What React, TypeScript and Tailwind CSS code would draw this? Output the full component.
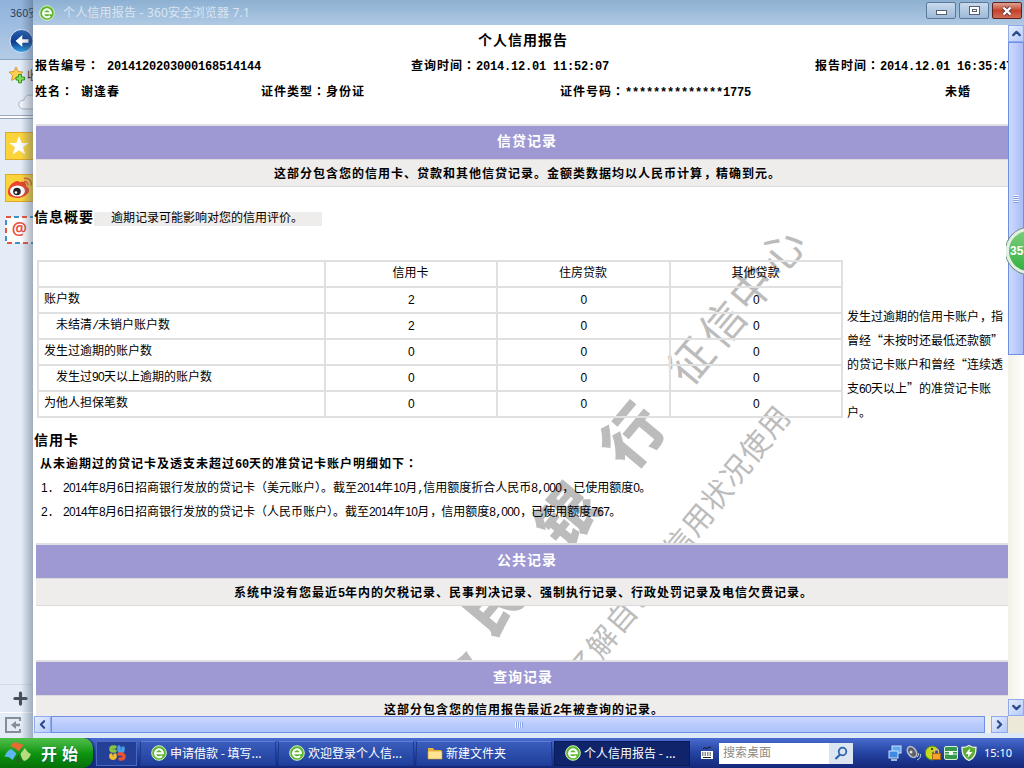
import React from 'react';
import { ChevronUp, ChevronDown, ChevronLeft, ChevronRight, Plus } from 'lucide-react';

const summaryRows = [
  { label: '账户数', values: ['2', '0', '0'] },
  { label: '未结清/未销户账户数', values: ['2', '0', '0'], indent: true },
  { label: '发生过逾期的账户数', values: ['0', '0', '0'] },
  { label: '发生过90天以上逾期的账户数', values: ['0', '0', '0'], indent: true },
  { label: '为他人担保笔数', values: ['0', '0', '0'] },
];

const noteLines = [
  '发生过逾期的信用卡账户，指',
  '曾经“未按时还最低还款额”',
  '的贷记卡账户和曾经“连续透',
  '支60天以上”的准贷记卡账',
  '户。',
];

const thinMarks = [
  { c: '征', x: 691, y: 361 },
  { c: '信', x: 723, y: 324 },
  { c: '中', x: 752, y: 288 },
  { c: '心', x: 782, y: 251 },
];

const boldMarks = [
  { c: '人', x: 440, y: 674, r: -75 },
  { c: '民', x: 493, y: 602, r: -50 },
  { c: '银', x: 567, y: 516, r: -50 },
  { c: '行', x: 633, y: 436, r: -50 },
];

const usageMarks = '了解自己的信用状况使用'.split('').map((c, i) => ({
  c,
  x: 583 + i * 19.1,
  y: 666 - i * 24.4,
}));

// Half-width runs get exactly half of a full-width cell, as in a bitmap song face.
function T({ children, bold }: { children: string; bold?: boolean }) {
  const pattern = bold ? /([\x20-\x7e]+|[：，“”])/ : /([0-9]+|[\x20-\x2f\x3a-\x7e]+|[：，“”])/;
  const parts = children.split(pattern).filter(Boolean);
  return (
    <span className={bold ? 'font-bold tracking-[1px]' : ''}>
      {parts.map((p, i) => {
        if (p === '：') return <span key={i} className="font-['Noto_Sans_CJK_TC',sans-serif]">{p}</span>;
        if (p === '，') return <span key={i} className="relative left-px">{p}</span>;
        if (p === '“' || p === '”') return <span key={i} className="inline-block w-3 text-center">{p}</span>;
        if (!bold && /^[0-9]+$/.test(p)) {
          return <span key={i} className="font-['Liberation_Sans',sans-serif] tracking-[-0.67px]">{p}</span>;
        }
        if (/^[\x20-\x7e]+$/.test(p)) {
          return (
            <span
              key={i}
              className={
                "whitespace-pre font-['Liberation_Mono',monospace] " +
                (bold ? 'tracking-[-0.2px]' : 'tracking-[-1.2px]')
              }
            >
              {p}
            </span>
          );
        }
        return <span key={i}>{p}</span>;
      })}
    </span>
  );
}

function Section({ title, titlePad, text, textPad }: { title: string; titlePad: string; text: string; textPad: string }) {
  return (
    <div className="relative ml-0.5 shrink-0">
      <div className={'h-[35px] border-t-2 border-[#e0dfe3] bg-[#9e99d3] text-[14px] leading-[29px] font-bold tracking-[1px] text-white ' + titlePad}>
        {title}
      </div>
      <div className={'h-7 border-y border-[#dddad9] bg-[#efedec] leading-[25px] ' + textPad}>
        <T bold>{text}</T>
      </div>
    </div>
  );
}

function BrowserIcon() {
  return (
    <svg width="16" height="16" viewBox="0 0 16 16" className="shrink-0">
      <circle cx="8" cy="8" r="7.3" fill="#5cb733" stroke="#d9f2c4" strokeWidth="1" />
      <path d="M3.8 8.2h8.2a4 4 0 1 0-1 2.8" fill="none" stroke="#fff" strokeWidth="2" />
    </svg>
  );
}

function Watermark() {
  return (
    <svg
      width="975"
      height="691"
      viewBox="34 25 975 691"
      className="pointer-events-none absolute top-0 left-0 font-['Noto_Sans_CJK_SC',sans-serif]"
      fill="#bcbcbc"
      textAnchor="middle"
    >
      {thinMarks.map((m) => (
        <text key={m.c} fontSize="44" fontWeight="400" transform={`translate(${m.x} ${m.y}) rotate(-50)`} y="16">{m.c}</text>
      ))}
      {usageMarks.map((m, i) => (
        <text key={i} fontSize="30" fontWeight="400" transform={`translate(${m.x} ${m.y}) rotate(-50)`} y="11">{m.c}</text>
      ))}
      {boldMarks.map((m) => (
        <text key={m.c} fontSize="60" fontWeight="900" transform={`translate(${m.x} ${m.y}) rotate(${m.r})`} y="22">{m.c}</text>
      ))}
    </svg>
  );
}

function Sidebar() {
  return (
    <aside className="relative flex w-[33px] shrink-0 flex-col overflow-hidden bg-[#e3ecf7]">
      <div className="h-[60px] shrink-0 border-b border-[#8ba3c4] bg-linear-to-b from-[#8fb2dc] to-[#b4cbe6]">
        <div className="h-[27px] pl-2.5 text-[11px] leading-[24px] whitespace-nowrap text-[#26405e]">360安</div>
        <svg width="25" height="26" viewBox="0 0 25 26" className="ml-[9px]">
          <defs>
            <linearGradient id="back" x1="0" y1="0" x2="0" y2="1">
              <stop offset="0" stopColor="#2b62b4" />
              <stop offset="0.55" stopColor="#0c3b8c" />
              <stop offset="1" stopColor="#36a9ec" />
            </linearGradient>
          </defs>
          <circle cx="12.5" cy="14" r="11.5" fill="url(#back)" stroke="#dbe8f6" />
          <path d="M19.500 12.200h-6.200V8L6.500 14l6.800 6v-4.200h6.200z" fill="#fff" />
        </svg>
      </div>
      <div className="flex h-[34px] shrink-0 items-end pl-2 text-[12px] text-[#222]">
        <svg width="18" height="18" viewBox="0 0 18 18" className="mb-2.5 shrink-0">
          <path d="M8 1l2 4.500 5 .5-3.700 3.400 1 5L8 12l-4.400 2.400 1-5L1 6l5-.5z" fill="#fbd14f" stroke="#e0982e" />
          <path d="M10.500 8.500h3v2.500h3v3h-3v2.800h-3V14H8v-3h2.500z" fill="#86e05c" stroke="#37911f" />
        </svg>
        <span className="pb-2.5 pl-px leading-[18px]">收</span>
      </div>
      <svg width="33" height="21" viewBox="0 0 33 21" className="shrink-0">
        <path d="M34 15H24c-7 0-7-9 0-9 1-5 6-6 10-4" fill="#f0f4fa" stroke="#aab4c0" />
      </svg>
      <div className="mb-[13px] h-1 shrink-0 border-y border-[#9aa9bb] bg-white" />
      <svg width="28" height="28" viewBox="0 0 28 28" className="mb-3.5 ml-[5px] shrink-0">
        <rect x=".5" y=".5" width="28" height="27" fill="#fbd43c" stroke="#dfa926" />
        <path d="M14 4l2.700 7h7l-5.600 4.300 2.200 7.200L14 18.200 7.700 22.500l2.200-7.200L4.300 11h7z" fill="#fff" />
      </svg>
      <svg width="28" height="28" viewBox="0 0 28 28" className="mb-3.5 ml-[5px] shrink-0">
        <rect x=".5" y=".5" width="28" height="27" fill="#fbd43c" stroke="#dfa926" />
        <path d="M3 17C4 10 12 5 14.500 8c5-1 7 0 6.500 4 6 3 3 10-7 12C7 24 2 22 3 17z" fill="#e8442f" />
        <ellipse cx="12.500" cy="17" rx="7.500" ry="5.500" fill="#fff" />
        <circle cx="12" cy="17.500" r="3.800" fill="#222" />
        <circle cx="11" cy="18.500" r="1.300" fill="#fff" />
        <path d="M19 7.500c3-.5 4 1.500 3.500 4M19 4.500c5-.8 8 2.500 7 7" fill="none" stroke="#ea5b36" strokeWidth="1.500" />
      </svg>
      <svg width="28" height="28" viewBox="0 0 28 28" className="ml-[5px] shrink-0">
        <rect x="1" y="1" width="30" height="26" fill="#fff" stroke="#e6553d" strokeWidth="2" strokeDasharray="5 11" />
        <rect x="1" y="1" width="30" height="26" fill="none" stroke="#3f93c4" strokeWidth="2" strokeDasharray="5 11" strokeDashoffset="8" />
        <text x="14.500" y="19" textAnchor="middle" fontSize="17" fontWeight="600" fill="#e8503f" fontFamily="Noto Sans, sans-serif">@</text>
      </svg>
      <div className="mt-[440px] h-[28px] shrink-0 border-t border-[#d3dce8] pt-1 pl-[11px]">
        <Plus size={19} strokeWidth={4} color="#474f58" />
      </div>
      <div className="flex-1 border-t border-white pt-1 pl-[5px]">
        <svg width="16" height="16" viewBox="0 0 16 16">
          <path d="M15 4V1H1v14h14v-3" fill="none" stroke="#858d98" strokeWidth="2" />
          <path d="M15 6.800h-4V4L6 8l5 4V9.200h4z" fill="#858d98" />
        </svg>
      </div>
      <div className="absolute inset-y-0 right-0 w-3 bg-linear-to-r from-transparent to-[#4a597070]" />
    </aside>
  );
}

function TitleBar() {
  return (
    <header className="flex h-[25px] shrink-0 items-center bg-linear-to-b from-[#8db0d2] to-[#b0c9e4] pl-1.5">
      <BrowserIcon />
      <span className="ml-2 font-['Noto_Sans','Noto_Sans_CJK_SC',sans-serif] text-[12px] tracking-[0.2px] whitespace-pre text-[#d9e5f1]">个人信用报告 - 360安全浏览器 7.1</span>
      <div className="ml-auto flex h-full gap-[3px] pt-0.5 pr-0.5">
        <div className="flex h-[17px] w-[30px] items-center justify-center rounded-[2px] border border-[#5d7898] bg-linear-to-b from-[#c8daed] to-[#9db9d8]">
          <div className="mt-1 h-[5px] w-[11px] border border-[#55616f] bg-white" />
        </div>
        <div className="flex h-[17px] w-[30px] items-center justify-center rounded-[2px] border border-[#5d7898] bg-linear-to-b from-[#c8daed] to-[#9db9d8]">
          <div className="h-[9px] w-[11px] border border-[#55616f] bg-white p-0.5">
            <div className="h-[3px] border border-[#55616f]" />
          </div>
        </div>
        <div className="flex h-[17px] w-[30px] items-center justify-center rounded-[2px] border border-[#5b2320] bg-linear-to-b from-[#dda294] via-[#c4402b] to-[#ce6d54]">
          <svg width="12" height="10" viewBox="0 0 12 10">
            <path d="M2.500 1.500l7 7M9.500 1.500l-7 7" stroke="#5a3a3a" strokeWidth="4" />
            <path d="M2.500 1.500l7 7M9.500 1.500l-7 7" stroke="#fff" strokeWidth="2.400" />
          </svg>
        </div>
      </div>
    </header>
  );
}

function SummaryTable() {
  return (
    <div className="grid w-[806px] shrink-0 grid-cols-[287px_172px_173px_172px] border-t-2 border-l-2 border-[#e0e0e0]">
      {['', '信用卡', '住房贷款', '其他贷款'].map((h, i) => (
        <div key={i} className="h-[26px] border-r-2 border-b-2 border-[#e0e0e0] pr-px text-center leading-[20px]">{h}</div>
      ))}
      {summaryRows.map((row) => (
        <React.Fragment key={row.label}>
          <div className={'h-[26px] border-r-2 border-b-2 border-[#e0e0e0] leading-[20px] ' + (row.indent ? 'pl-[17px]' : 'pl-[5px]')}>
            <T>{row.label}</T>
          </div>
          {row.values.map((v, i) => (
            <div key={i} className="h-[26px] border-r-2 border-b-2 border-[#e0e0e0] text-center leading-[21px]">
              <T>{v}</T>
            </div>
          ))}
        </React.Fragment>
      ))}
    </div>
  );
}

function Report() {
  return (
    <main className="relative h-[691px] w-[974px] overflow-hidden bg-white text-[12px] whitespace-nowrap text-black">
      <Watermark />
      <div className="relative flex flex-col">
        <h1 className="h-7 pl-[444px] text-[14px] leading-[28px] font-bold tracking-[1px]">个人信用报告</h1>
        <div className="flex h-[26px] pl-px leading-[24px]">
          <div className="w-[376px] shrink-0"><T bold>报告编号： 2014120203000168514144</T></div>
          <div className="w-[404px] shrink-0"><T bold>查询时间：2014.12.01 11:52:07</T></div>
          <div><T bold>报告时间：2014.12.01 16:35:47</T></div>
        </div>
        <div className="flex h-[45px] pl-px leading-[24px]">
          <div className="w-[226px] shrink-0"><T bold>姓名： 谢逢春</T></div>
          <div className="w-[299px] shrink-0"><T bold>证件类型：身份证</T></div>
          <div className="w-[385px] shrink-0"><T bold>证件号码：**************1775</T></div>
          <div><T bold>未婚</T></div>
        </div>
        <Section
          title="信贷记录"
          titlePad="pl-[461px]"
          text="这部分包含您的信用卡、贷款和其他信贷记录。金额类数据均以人民币计算，精确到元。"
          textPad="pl-[238px]"
        />
        <div className="mt-[19px] flex h-[54px] leading-[21px]">
          <h2 className="w-[60px] text-[14px] font-bold tracking-[1px]">信息概要</h2>
          <div className="mt-[6px] h-3.5 w-[228px] bg-[#efedec] pl-[17px] leading-[10px]">逾期记录可能影响对您的信用评价。</div>
        </div>
        <div className="flex h-[168px] items-start pl-[3px]">
          <SummaryTable />
          <div className="pt-[44px] pl-1">
            {noteLines.map((line) => (
              <div key={line} className="h-6 leading-6"><T>{line}</T></div>
            ))}
          </div>
        </div>
        <h2 className="h-6 text-[14px] leading-[22px] font-bold tracking-[1px]">信用卡</h2>
        <div className="h-6 pl-1.5 leading-[22px]"><T bold>从未逾期过的贷记卡及透支未超过60天的准贷记卡账户明细如下：</T></div>
        <div className="flex h-6 pl-[7px] leading-[22px]">
          <span className="w-[22px]"><T>1.</T></span>
          <T>2014年8月6日招商银行发放的贷记卡（美元账户）。截至2014年10月,信用额度折合人民币8,000，已使用额度0。</T>
        </div>
        <div className="flex h-[43px] pl-[7px] leading-[22px]">
          <span className="w-[22px]"><T>2.</T></span>
          <T>2014年8月6日招商银行发放的贷记卡（人民币账户）。截至2014年10月，信用额度8,000，已使用额度767。</T>
        </div>
        <Section
          title="公共记录"
          titlePad="pl-[461px]"
          text="系统中没有您最近5年内的欠税记录、民事判决记录、强制执行记录、行政处罚记录及电信欠费记录。"
          textPad="pl-[198px]"
        />
        <div className="h-[54px]" />
        <Section
          title="查询记录"
          titlePad="pl-[457px]"
          text="这部分包含您的信用报告最近2年被查询的记录。"
          textPad="pl-[348px]"
        />
      </div>
    </main>
  );
}

const scrollButton = 'flex items-center justify-center shrink-0 border border-[#8ea9ee] bg-linear-to-br from-[#e6eefe] to-[#b4c9fb] text-[#2b4a8c]';

function VerticalScroll() {
  return (
    <div className="flex w-4 shrink-0 flex-col bg-linear-to-r from-[#f3f1e9] to-[#fefefb]">
      <div className={scrollButton + ' h-[17px]'}><ChevronUp size={13} strokeWidth={4} /></div>
      <div className="flex h-[313px] flex-col items-center justify-center gap-px border border-[#6f8fe4] bg-linear-to-r from-[#cdd9ff] via-[#bccbfd] to-[#a9bcf6]">
        {[0, 1, 2, 3].map((n) => <div key={n} className="h-px w-1.5 bg-[#eef3ff] shadow-[0_1px_0_#8ba4e4]" />)}
      </div>
      <div className="flex-1" />
      <div className={scrollButton + ' h-[17px]'}><ChevronDown size={13} strokeWidth={4} /></div>
    </div>
  );
}

function HorizontalScroll() {
  return (
    <div className="flex h-[17px] shrink-0 bg-[#f3f2ea] pl-px">
      <div className={scrollButton + ' w-[17px]'}><ChevronLeft size={13} strokeWidth={4} /></div>
      <div className="flex w-[934px] items-center justify-center gap-px border border-[#6f8fe4] bg-linear-to-b from-[#cdd9ff] via-[#b9cbfb] to-[#aec3f8]">
        {[0, 1, 2, 3].map((n) => <div key={n} className="h-1.5 w-px bg-[#eef3ff] shadow-[1px_0_0_#8ba4e4]" />)}
      </div>
      <div className="w-1.5" />
      <div className={scrollButton + ' w-[17px]'}><ChevronRight size={13} strokeWidth={4} /></div>
      <div className="flex-1 bg-[#ece9d8]" />
    </div>
  );
}

function TaskButton({ icon, label, active }: { icon: React.ReactNode; label: string; active?: boolean }) {
  return (
    <div
      className={
        'flex h-[25px] w-[136px] items-center gap-[3px] border pl-2.5 ' +
        (active ? 'border-[#0b1c58] bg-[#10246b]' : 'border-[#1c3a90] border-t-[#5b7fd6] bg-linear-to-b from-[#3a5cbb] to-[#203f9c]')
      }
    >
      {icon}
      <span className="whitespace-nowrap">{label}</span>
    </div>
  );
}

function Taskbar() {
  return (
    <footer className="flex h-[30px] items-center bg-linear-to-b from-[#4a6cd0] via-[#2443a2] to-[#14287a] text-[12px] text-white">
      <div className="flex h-full w-[93px] items-center rounded-r-[10px] bg-linear-to-b from-[#4fc04a] via-[#0d960f] to-[#067008] pl-1 shadow-[1px_0_2px_#0a1c5c]">
        <svg width="28" height="26" viewBox="0 0 28 26">
          <path d="M6.500 6.500C9 2 12 1.500 14 3c2 1.500 4 2 6 1l-5.500 7.500c-2-3-5-4.500-8-5z" fill="#ee6a32" />
          <path d="M.5 17c2-5 4-7 6.500-8 2 1.500 4 3 5.500 4.500L8.500 20C6 17 3 16 .5 17z" fill="#5fb6f0" />
          <path d="M16.500 13.500L21 8c1.500 3 4 5.500 6 6-1.500 4-4 6.500-7 7-2-2-3-4.500-3.500-7.500z" fill="#b7dc80" />
          <path d="M10 20.500l4.500-6 3.500 7c-2.500 2.500-5.500 2-8-1z" fill="#1a6d1b" />
        </svg>
        <span className="ml-[9px] text-[16px] font-bold tracking-[5px] [text-shadow:1px_1px_1px_#064]">开始</span>
      </div>
      <div className="ml-[3px] flex h-[25px] w-[41px] items-center justify-center border border-[#4a68bd] bg-[#243f98]">
        <svg width="18" height="18" viewBox="0 0 18 18" fill="none" strokeWidth="3.500" strokeLinecap="round">
          <path d="M7 3H5a2 2 0 0 0 0 4h2" stroke="#88c440" />
          <path d="M11 3v2.500a2 2 0 0 0 4 0V4" stroke="#4b9fe4" />
          <path d="M3 11v2a2.200 2.200 0 0 0 4 0v-2" stroke="#f5be2c" />
          <path d="M11 10h2.500a2.500 2.500 0 0 1 0 5H12" stroke="#e85434" />
        </svg>
      </div>
      <div className="ml-[3px] flex gap-0.5">
        <TaskButton icon={<BrowserIcon />} label="申请借款 - 填写..." />
        <TaskButton icon={<BrowserIcon />} label="欢迎登录个人信..." />
        <TaskButton
          icon={
            <svg width="16" height="16" viewBox="0 0 16 16" className="shrink-0">
              <path d="M1 3h5l1.500 2H14v8H1z" fill="#e9b53a" />
              <path d="M1 6h14v8H1z" fill="#ffe493" stroke="#d39b28" strokeWidth=".6" />
            </svg>
          }
          label="新建文件夹"
        />
        <TaskButton icon={<BrowserIcon />} label="个人信用报告 - ..." active />
      </div>
      <svg width="14" height="14" viewBox="0 0 14 14" className="ml-2.5">
        <path d="M3 3c2-3 3 1 5-1s2 0 3-1" fill="none" stroke="#111" />
        <rect x="1" y="5" width="12" height="8" fill="#fff" />
        <path d="M2 7h10M2 9h10" stroke="#222" strokeDasharray="1.500 1" />
        <path d="M3 11.500h8" stroke="#222" />
      </svg>
      <div className="ml-[5px] h-[21px] w-[110px] bg-white pl-1 leading-[18px] text-[#8d8d86]">搜索桌面</div>
      <div className="flex h-[21px] w-6 items-center justify-center bg-[#dce6f3]">
        <svg width="14" height="14" viewBox="0 0 14 14" fill="none" stroke="#2f62ae">
          <circle cx="8.500" cy="5.500" r="3.800" strokeWidth="1.800" />
          <path d="M6 8.500L1.500 13" strokeWidth="2.200" />
        </svg>
      </div>
      <div className="ml-[34px] flex items-center gap-[2px]">
        <svg width="16" height="16" viewBox="0 0 16 16">
          <rect x="5" y="1" width="9" height="7" fill="#5fa8f0" stroke="#cfe2f7" />
          <rect x="2" y="6" width="9" height="7" fill="#3d8ce4" stroke="#cfe2f7" />
          <path d="M4 15h6" stroke="#cfe2f7" strokeWidth="1.500" />
        </svg>
        <svg width="17" height="16" viewBox="0 0 17 16">
          <ellipse cx="7" cy="7" rx="4" ry="6" transform="rotate(-35 7 7)" fill="#5c6067" stroke="#b9bec6" strokeWidth="1.500" />
          <circle cx="6" cy="7" r="1.500" fill="#ddd" />
          <path d="M12 12c1.500-1 2-3 1.500-4M12 15c3-1 4-4 3.500-6" fill="none" stroke="#c3cad6" />
        </svg>
        <svg width="17" height="16" viewBox="0 0 17 16">
          <path d="M8 8l6-4a7 7 0 1 0 0 8z" fill="#c9d81d" stroke="#4f8c1c" />
          <circle cx="8" cy="4" r="1" fill="#222" />
          <rect x="8.500" y="8.500" width="8" height="6" fill="#f2a52c" stroke="#a86410" />
          <path d="M10.500 8V6.500a2 2 0 0 1 4 0V8" fill="none" stroke="#e3c07c" strokeWidth="1.300" />
        </svg>
        <svg width="16" height="16" viewBox="0 0 16 16">
          <rect x="1.500" y="1.500" width="13" height="13" rx="1.500" fill="#36984a" stroke="#d5efd2" />
          <path d="M2 6.500h12M2 9h12" stroke="#e2f5df" />
          <rect x="6" y="6" width="4" height="4" fill="#f1faf0" />
        </svg>
        <svg width="16" height="16" viewBox="0 0 16 16">
          <path d="M8 .5c2 1.500 4 2 7 2 0 6-1 10-7 13C2 12.500 1 8.500 1 2.500c3 0 5-.5 7-2z" fill="#5cab35" stroke="#e8f3df" strokeWidth="1.300" />
          <path d="M9 3L4.500 9h3L6.500 13 11.500 7H8.500z" fill="#fff" />
        </svg>
      </div>
      <span className="ml-[7px] font-['Noto_Sans',sans-serif] text-[11px]">15:10</span>
    </footer>
  );
}

export default function App() {
  return (
    <div className="flex h-[768px] w-[1024px] flex-col overflow-hidden bg-[#dfe9f5] font-['Noto_Sans_CJK_SC',sans-serif]">
      <div className="relative flex h-[738px]">
        <Sidebar />
        <div className="flex min-w-0 flex-1 flex-col">
          <TitleBar />
          <div className="flex h-[691px] bg-white pl-px">
            <Report />
            <VerticalScroll />
          </div>
          <HorizontalScroll />
          <div className="h-[5px] bg-[#dce9f8]" />
        </div>
        <div className="absolute top-[228px] left-[1006px] h-[46px] w-[18px] overflow-hidden">
          <div className="h-[46px] w-[46px] rounded-full border-[3px] border-[#e4efe4] bg-linear-to-b from-[#79cd7a] to-[#2fb13f] pl-px font-['Liberation_Sans',sans-serif] text-[12px] leading-[40px] font-bold text-white shadow-[0_0_0_1px_#6f8f74]">
            35
          </div>
        </div>
      </div>
      <Taskbar />
    </div>
  );
}
